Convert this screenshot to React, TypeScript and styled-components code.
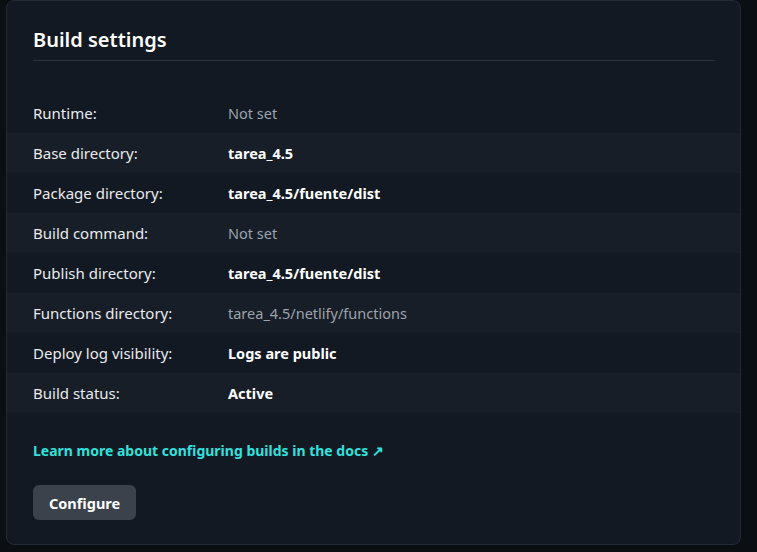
import React from "react";
import styled, { createGlobalStyle } from "styled-components";

const Global = createGlobalStyle`
  html, body {
    margin: 0;
    padding: 0;
    background: #0b0e13;
  }
  body {
    font-family: "Noto Sans", "Open Sans", sans-serif;
    color: #e9ebee;
  }
`;

const Page = styled.div`
  width: 757px;
  height: 552px;
  padding: 0 16px 7px 6px;
  box-sizing: border-box;
  display: flex;
  flex-direction: column;
  justify-content: flex-end;
`;

const Card = styled.section`
  background: #131922;
  border: 1px solid #222a34;
  border-radius: 8px;
  height: 560px;
  box-sizing: border-box;
  display: flex;
  flex-direction: column;
`;

const Header = styled.div`
  margin: 0 25px 0 26px;
  padding: 24px 0 5px;
  border-bottom: 1px solid #2a313b;
`;

const Title = styled.h2`
  margin: 0;
  font-size: 20px;
  line-height: 30px;
  font-weight: 600;
  color: #ffffff;
`;

const Table = styled.div`
  margin-top: 32px;
  display: flex;
  flex-direction: column;
`;

const Row = styled.div<{ $alt: boolean }>`
  height: 40px;
  display: grid;
  grid-template-columns: 195px 1fr;
  align-items: center;
  padding-left: 26px;
  background: ${(p) => (p.$alt ? "#181e27" : "transparent")};
  font-size: 15px;
`;

const Label = styled.span`
  color: #e9ebee;
`;

const Value = styled.span<{ $tone: "strong" | "muted" }>`
  color: ${(p) => (p.$tone === "strong" ? "#ffffff" : "#9ca3ad")};
  font-weight: ${(p) => (p.$tone === "strong" ? 700 : 400)};
  font-size: 14.5px;
`;

const Footer = styled.div`
  padding: 27px 26px 0;
  display: flex;
  flex-direction: column;
  align-items: flex-start;
  gap: 23px;
`;

const Link = styled.a`
  color: #32e1dd;
  font-weight: 700;
  font-size: 14px;
  text-decoration: none;
  line-height: 22px;
`;

const Button = styled.button`
  background: #3c424b;
  color: #ffffff;
  border: none;
  border-radius: 6px;
  height: 35px;
  padding: 0 16px;
  font-family: inherit;
  font-size: 14.5px;
  font-weight: 700;
`;

const rows: { label: string; value: string; tone: "strong" | "muted" }[] = [
  { label: "Runtime:", value: "Not set", tone: "muted" },
  { label: "Base directory:", value: "tarea_4.5", tone: "strong" },
  { label: "Package directory:", value: "tarea_4.5/fuente/dist", tone: "strong" },
  { label: "Build command:", value: "Not set", tone: "muted" },
  { label: "Publish directory:", value: "tarea_4.5/fuente/dist", tone: "strong" },
  { label: "Functions directory:", value: "tarea_4.5/netlify/functions", tone: "muted" },
  { label: "Deploy log visibility:", value: "Logs are public", tone: "strong" },
  { label: "Build status:", value: "Active", tone: "strong" },
];

export default function App() {
  return (
    <>
      <Global />
      <Page>
        <Card>
          <Header>
            <Title>Build settings</Title>
          </Header>
          <Table>
            {rows.map((r, i) => (
              <Row key={r.label} $alt={i % 2 === 1}>
                <Label>{r.label}</Label>
                <Value $tone={r.tone}>{r.value}</Value>
              </Row>
            ))}
          </Table>
          <Footer>
            <Link href="#">Learn more about configuring builds in the docs ↗</Link>
            <Button>Configure</Button>
          </Footer>
        </Card>
      </Page>
    </>
  );
}
